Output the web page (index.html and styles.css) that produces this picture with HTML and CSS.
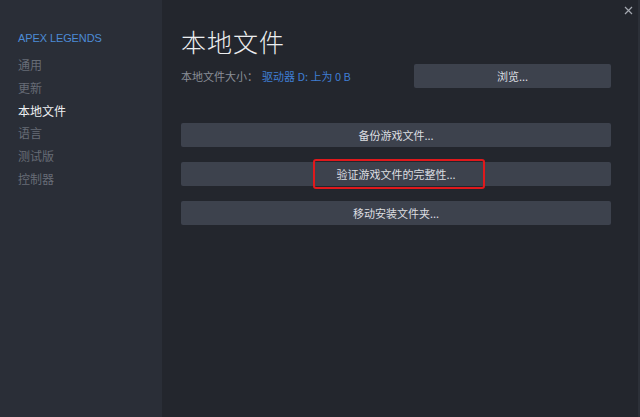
FILE: index.html
```html
<!DOCTYPE html>
<html lang="zh-CN">
<head>
    <meta charset="UTF-8">
    <title>本地文件</title>
    <link rel="stylesheet" href="styles.css">
</head>
<body>
    <div class="window">
        <div class="sidebar">
            <div class="game-title">APEX LEGENDS</div>
            <div class="nav-item">通用</div>
            <div class="nav-item">更新</div>
            <div class="nav-item active">本地文件</div>
            <div class="nav-item">语言</div>
            <div class="nav-item">测试版</div>
            <div class="nav-item">控制器</div>
        </div>

        <div class="content">
            <div class="close">
                <svg width="9" height="9" viewBox="0 0 9 9">
                    <path d="M1 1 L8 8 M8 1 L1 8" stroke="#a4a8b0" stroke-width="1.2"/>
                </svg>
            </div>
            <h1>本地文件</h1>

            <div class="size-row">
                <div class="size-info">
                    本地文件大小：<span class="drive">驱动器 D: 上为 0 B</span>
                </div>
                <button class="btn browse">浏览...</button>
            </div>

            <div class="actions">
                <button class="btn">备份游戏文件...</button>
                <button class="btn"><span class="highlight">验证游戏文件的完整性...</span></button>
                <button class="btn">移动安装文件夹...</button>
            </div>
        </div>
    </div>
</body>
</html>
```

FILE: styles.css
```css
html, body {
    margin: 0;
    padding: 0;
    height: 100%;
}
body {
    font-family: "Noto Sans CJK SC", "Liberation Sans", sans-serif;
    background-color: #23262d;
}
.window {
    display: flex;
    height: 417px;
    border-right: 2px solid #2c3038;
    box-sizing: border-box;
}
.sidebar {
    width: 162px;
    flex-shrink: 0;
    background-color: #2a2e37;
    padding: 32px 0 0 18px;
    box-sizing: border-box;
}
.game-title {
    font-family: "Liberation Sans", sans-serif;
    color: #4c8bd6;
    font-size: 11px;
    letter-spacing: -0.1px;
    margin-bottom: 10px;
}
.nav-item {
    color: #676c76;
    font-size: 12px;
    line-height: 22.8px;
}
.nav-item.active {
    color: #eef0f2;
}
.content {
    flex: 1;
    position: relative;
    padding: 24px 27px 0 19px;
}
.close {
    position: absolute;
    top: 6px;
    right: 5px;
}
.close svg {
    display: block;
}
h1 {
    margin: 0;
    color: #eceef0;
    font-size: 25px;
    font-weight: 300;
    letter-spacing: 1px;
    line-height: 34px;
}
.size-row {
    display: flex;
    align-items: center;
    margin-top: 6px;
}
.size-info {
    flex: 1;
    color: #8a8f98;
    font-size: 11px;
}
.drive {
    color: #3f7ed4;
    margin-left: 4px;
}
.btn {
    display: flex;
    align-items: center;
    justify-content: center;
    height: 24px;
    border: none;
    border-radius: 2px;
    background-color: #3d424d;
    color: #dcdee1;
    font-family: "Noto Sans CJK SC", "Liberation Sans", sans-serif;
    font-size: 11px;
    padding: 0;
}
.browse {
    width: 197px;
}
.actions {
    display: flex;
    flex-direction: column;
    gap: 15px;
    margin-top: 35px;
}
.highlight {
    display: flex;
    align-items: center;
    justify-content: center;
    box-sizing: border-box;
    width: 172px;
    height: 30px;
    margin-left: 6px;
    padding-right: 6px;
    border: 2px solid #e0191c;
    border-radius: 3px;
}
```
